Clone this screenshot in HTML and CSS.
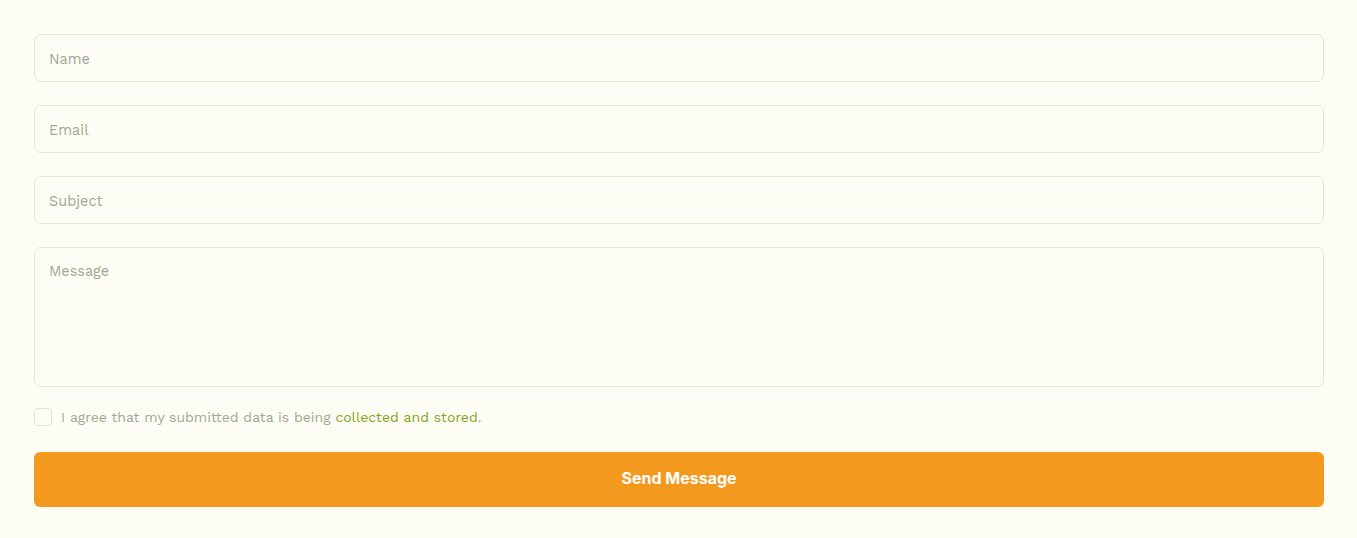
FILE: index.html
```html
<!DOCTYPE html>
<html lang="en">
<head>
    <meta charset="UTF-8">
    <meta name="viewport" content="width=device-width, initial-scale=1.0">
    <title>Contact</title>
    <link rel="stylesheet" href="styles.css">
</head>
<body>
    <form class="contact-form">
        <input type="text" class="field" placeholder="Name">
        <input type="email" class="field" placeholder="Email">
        <input type="text" class="field" placeholder="Subject">
        <textarea class="field message" placeholder="Message"></textarea>
        <label class="agree">
            <input type="checkbox" class="check">
            <span>I agree that my submitted data is being <a href="#" class="link">collected and stored</a>.</span>
        </label>
        <button type="button" class="send">Send Message</button>
    </form>
</body>
</html>
```

FILE: styles.css
```css
body {
    margin: 0;
    background-color: #fdfdf6;
    font-family: "Work Sans", Inter, "Liberation Sans", sans-serif;
}
.contact-form {
    display: flex;
    flex-direction: column;
    gap: 23px;
    padding: 34px 33px 31px 34px;
}
.field {
    height: 48px;
    box-sizing: border-box;
    border: 1px solid #e6e6d4;
    border-radius: 7px;
    background-color: #fdfdf6;
    padding: 2px 14px 0;
    font-family: inherit;
    font-size: 14.5px;
    color: #55574a;
    outline: none;
}
.field::placeholder {
    color: #a4a793;
}
.message {
    height: 140px;
    padding: 15px 14px;
    resize: none;
}
.agree {
    display: flex;
    align-items: center;
    gap: 9px;
    font-size: 14px;
    color: #a4a793;
    margin-top: -2px;
}
.check {
    appearance: none;
    width: 18px;
    height: 18px;
    margin: 0;
    border: 1px solid #e3e3d1;
    border-radius: 4px;
    background-color: #fdfdf6;
}
.link {
    color: #87a31a;
    text-decoration: none;
}
.send {
    height: 55px;
    padding: 0 0 4px;
    border: none;
    border-radius: 6px;
    background-color: #f39a1e;
    color: #fff;
    font-family: Inter, "Liberation Sans", sans-serif;
    font-weight: 700;
    font-size: 16px;
    margin-top: 3px;
}
```
